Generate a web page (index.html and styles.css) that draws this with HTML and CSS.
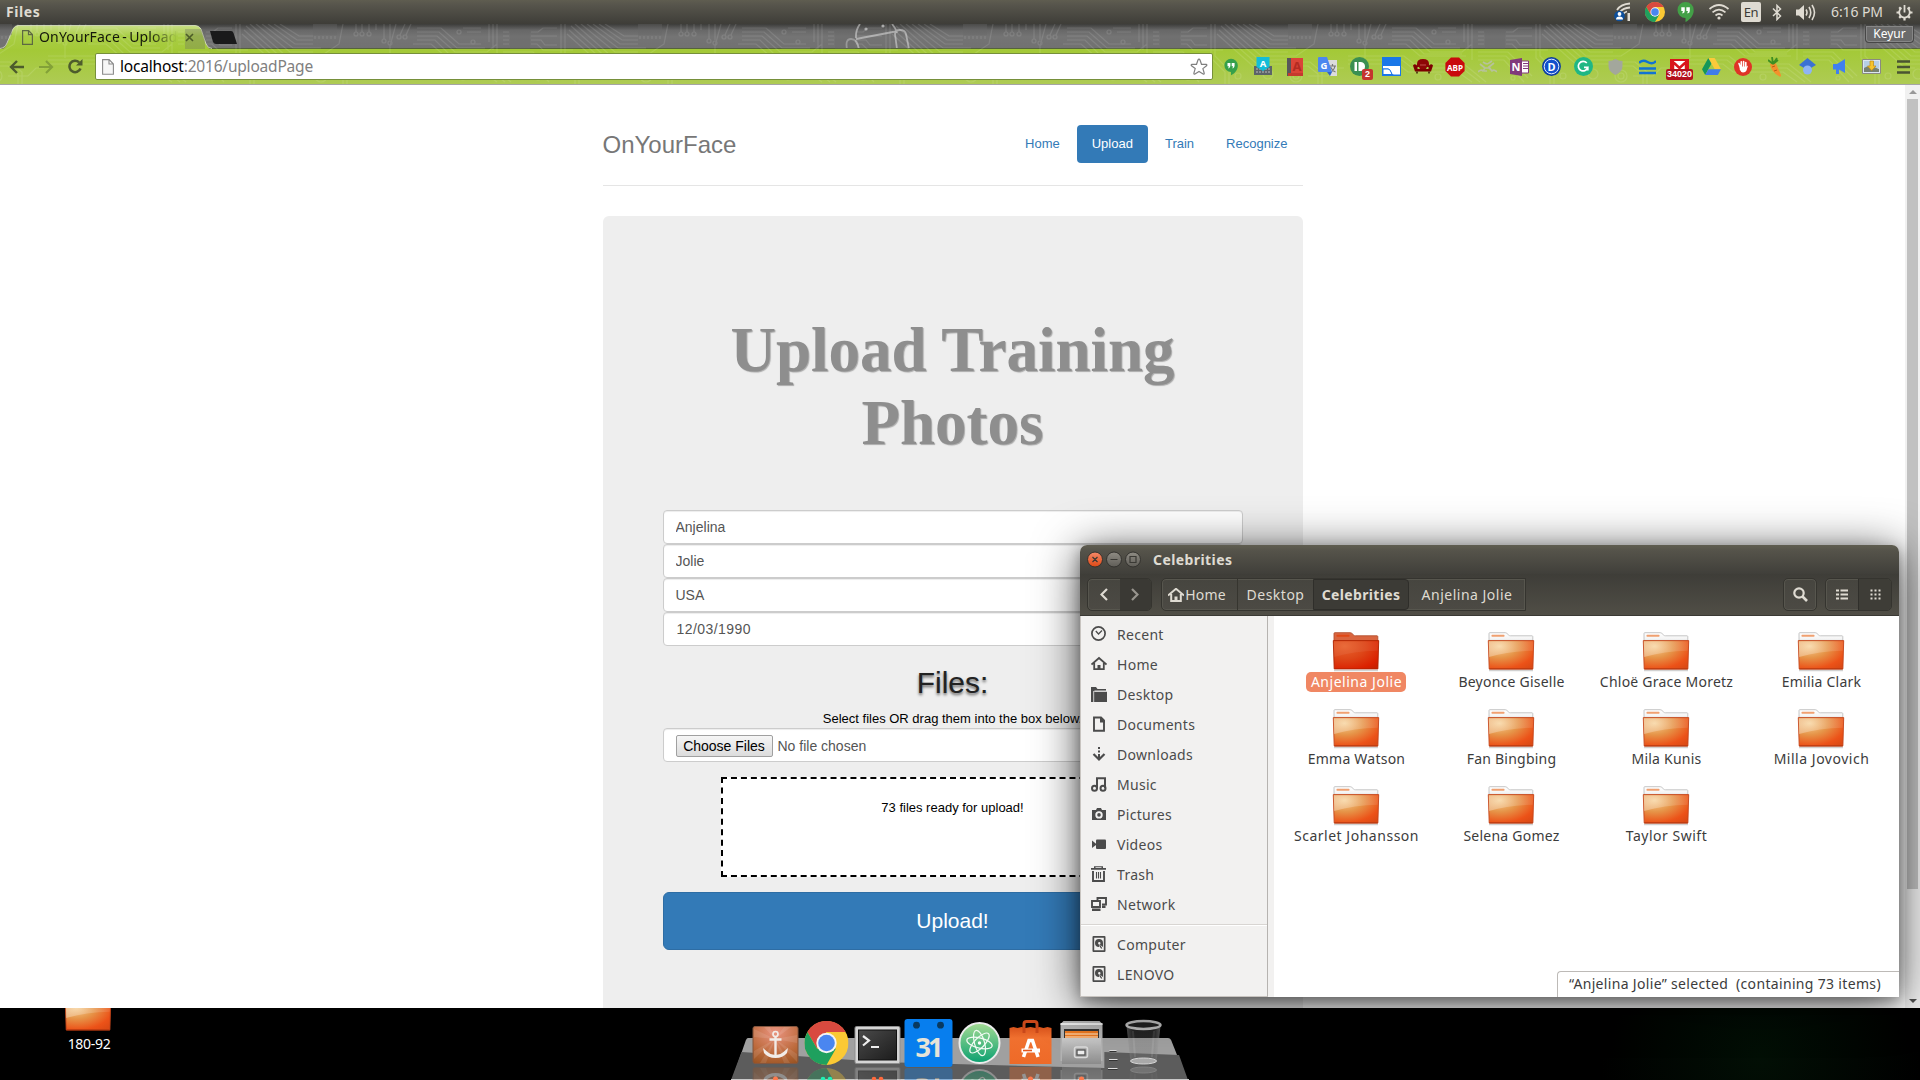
FILE: index.html
```html
<!DOCTYPE html>
<html lang="en">
<head>
<meta charset="utf-8">
<title>OnYourFace - Upload</title>
<link rel="stylesheet" href="styles.css">
</head>
<body>
<svg class="defs" width="0" height="0" aria-hidden="true">
  <defs>
    <linearGradient id="fBack" x1="0" y1="0" x2="0" y2="1"><stop offset="0" stop-color="#fff"/><stop offset=".6" stop-color="#f4f4f4"/><stop offset="1" stop-color="#ccc"/></linearGradient>
    <radialGradient id="fFront" cx=".25" cy=".2" r="1"><stop offset="0" stop-color="#f6cf94"/><stop offset=".4" stop-color="#e69549"/><stop offset=".8" stop-color="#ec5218"/><stop offset="1" stop-color="#dc4a14"/></radialGradient>
    <radialGradient id="fSel" cx=".25" cy=".2" r="1"><stop offset="0" stop-color="#e8622e"/><stop offset=".45" stop-color="#dd4618"/><stop offset=".85" stop-color="#db2100"/><stop offset="1" stop-color="#c92000"/></radialGradient>
    <linearGradient id="fShine" x1="0" y1="0" x2="1" y2="0"><stop offset="0" stop-color="#fff" stop-opacity=".32"/><stop offset="1" stop-color="#fff" stop-opacity=".08"/></linearGradient>
    <symbol id="folder" viewBox="0 0 48 40">
      <path d="M2 38.5h44" stroke="#000" stroke-opacity=".18" stroke-width="1.6"/>
      <path d="M2 11V1.5q0-.8.8-.8h15.4q1 0 1.800.8l1.800 1.700q.6.600 1.500.600h21.700q.8 0 .8.8V11z" fill="url(#fBack)" stroke="#bfbfbf" stroke-width=".9"/>
      <rect x="4.500" y="2.700" width="13" height="2" rx=".6" fill="#f0a070"/>
      <path d="M1.300 8.600h45.400l-.8 28.300H2.200z" fill="url(#fFront)" stroke="#c4441a" stroke-width=".9"/>
      <path d="M1.800 9.200h44.300l-.3 9.500Q22 19 2 25z" fill="url(#fShine)"/>
      <path d="M2.300 37h43.500" stroke="#b3350c" stroke-width="1"/>
    </symbol>
    <symbol id="folderSel" viewBox="0 0 48 40">
      <path d="M2 38.500h44" stroke="#000" stroke-opacity=".18" stroke-width="1.600"/>
      <path d="M2 11V1.500q0-.8.8-.8h15.400q1 0 1.800.8l1.800 1.700q.6.600 1.500.600h21.700q.8 0 .8.8V11z" fill="#d9653f" stroke="#b4502f" stroke-width=".9"/>
      <rect x="4.500" y="2.700" width="13" height="2" rx=".6" fill="#e04816"/>
      <path d="M1.300 8.600h45.400l-.8 28.300H2.200z" fill="url(#fSel)" stroke="#b02200" stroke-width=".9"/>
      <path d="M1.800 9.200h44.300l-.3 9.500Q22 19 2 25z" fill="#fff" fill-opacity=".06"/>
    </symbol>
    <symbol id="chrome" viewBox="0 0 44 44">
      <circle cx="22" cy="22" r="22" fill="#fbc934"/>
      <path d="M22 11h19.100A22 22 0 0 0 2.900 11L12.500 27.500z" fill="#d94a3f"/>
      <path d="M2.900 11A22 22 0 0 0 22 44L31.500 27.500 22 30 12.500 27.500z" fill="#1fa05e"/>
      <circle cx="22" cy="22" r="10.200" fill="#f4f4f4"/><circle cx="22" cy="22" r="8.300" fill="#4a86f0"/>
    </symbol>
    <symbol id="quote" viewBox="0 0 16 19">
      <path d="M8 0a7.600 7.600 0 0 0 0 15.200V19c4-2 7.800-6 7.800-11.200A7.700 7.700 0 0 0 8 0z" fill="currentColor"/>
      <path d="M4 5h3.300v3.200q0 1.800-1.600 2.600H4.600q.9-1 .9-2.200H4zm4.800 0h3.300v3.200q0 1.800-1.600 2.600H9.400q.9-1 .9-2.200H8.800z" fill="#fff"/>
    </symbol>
    <symbol id="disk" viewBox="0 0 16 16">
      <path fill-rule="evenodd" d="M2.500 0h11q1 0 1 1v14q0 1-1 1h-11q-1 0-1-1V1q0-1 1-1zM3.200 1.700v12.600h9.600V1.700z"/>
      <path fill-rule="evenodd" d="M8 3a4 4 0 0 1 4 4v4L8.500 8.500 8 11a4 4 0 0 1 0-8zm.3 3a1.200 1.200 0 1 0 0 2.400 1.200 1.200 0 0 0 0-2.400z"/><path d="M8.700 9.300l2 3.200" stroke="currentColor" stroke-width="1.300"/>
    </symbol>
    <pattern id="circuit" x="963" y="0" width="325" height="60" patternUnits="userSpaceOnUse">
      <g fill="none" stroke="#fff" stroke-width="1.200" opacity=".11">
        <path d="M2 12v3M6 12v3M10 12v3M14 12v3M18 12v3M22 12v3M30 0l-4 20-18 12H0M43 0v8M49 0v8M56 0v8M63 0v6M71 0v15M77 0v16M83 0l-6 22v12M92 0l-5 11M98 0l-5 11"/>
        <circle cx="43" cy="10" r="2"/><circle cx="49" cy="10" r="2"/><circle cx="56" cy="10" r="2"/><circle cx="71" cy="17" r="2"/><circle cx="77" cy="19" r="2"/><circle cx="86" cy="13" r="2"/><circle cx="92" cy="13" r="2"/>
        <path d="M104 4h24l18 16h22M104 8h22l18 16h28M104 12h20l18 16h32l10-8M104 16h18l14 14h38M100 20h18l14 12h46M60 32h56l10 8h50l22 18M60 36h54l10 8h50l18 14M60 40h50l10 8h50l14 10M176 0v18M180 0v26M184 0v36M168 4h-18M168 8h-14"/>
        <circle cx="146" cy="8" r="2"/><circle cx="160" cy="18" r="2"/>
        <path d="M190 8h6M190 12h6M190 16h6M190 20h6M218 8h7l5-4h14M218 12h26M218 16h10l4 5h12M218 20h6l6 6h30M190 28h30l24 24M190 32h28l22 22M190 36h26l20 22M248 0v34l14 14v12M252 0v32l14 14v14"/>
        <path d="M262 0l36 32h27M268 0l34 28h23M274 0l31 24h20M280 0l27 20h18M286 0l23 16h16M292 0l19 12h14M258 2l38 34h29M256 6l38 34h31M254 10l38 34h10"/>
        <path d="M0 38h22l12 10v12M0 42h20l10 8v10M0 24h8M20 52h20l8-8h8"/>
        <circle cx="305" cy="50" r="5"/><circle cx="275" cy="52" r="3"/><circle cx="8" cy="52" r="6"/><circle cx="8" cy="52" r="3"/><circle cx="150" cy="53" r="3"/><circle cx="225" cy="54" r="2"/>
      </g>
      <rect x="0" y="0" width="24" height="11" fill="#666" opacity=".35"/><rect x="197" y="5" width="20" height="20" fill="#666" opacity=".3"/>
    </pattern>
    <linearGradient id="strip" x1="0" y1="0" x2="0" y2="1"><stop offset="0" stop-color="#3c3c3a"/><stop offset=".25" stop-color="#686868"/><stop offset=".5" stop-color="#747474"/><stop offset="1" stop-color="#717171"/></linearGradient>
    <linearGradient id="tabFill" x1="0" y1="0" x2="0" y2="1"><stop offset="0" stop-color="#c8de86"/><stop offset=".45" stop-color="#a9ce44"/><stop offset="1" stop-color="#a4c938"/></linearGradient>
    <linearGradient id="bar" x1="0" y1="0" x2="0" y2="1"><stop offset="0" stop-color="#a3c936"/><stop offset="1" stop-color="#aecb54"/></linearGradient>
  </defs>
</svg>
<div class="screen">
  <header class="panel">
    <span class="panel-app">Files</span>
    <div class="indicators">
      <svg width="18" height="20" viewBox="0 0 18 20"><g fill="none" stroke="#dfdbd2" stroke-width="1.800"><path d="M3 8Q7 2 16 1.500M6 10q3-4 10-4.500M9 12q2-2 4-2.500"/></g><path d="M13.500 11h2.500v8h-2.500z" fill="#dfdbd2"/><circle cx="5.500" cy="14" r="5.300" fill="#0c4f9c"/><circle cx="5.500" cy="12" r="1.900" fill="#fff"/><path d="M2 17.500q0-3 3.500-3t3.500 3z" fill="#fff"/></svg>
      <svg width="20" height="20"><use href="#chrome"/></svg>
      <svg class="hang" width="17" height="20"><use href="#quote"/></svg>
      <svg width="22" height="16" viewBox="0 0 22 16"><g fill="none" stroke="#dfdbd2" stroke-width="1.700"><path d="M1.500 5Q11-3 20.500 5M4.500 8.300q6.500-5.500 13 0M7.500 11.500q3.500-3 7 0"/></g><circle cx="11" cy="14" r="1.600" fill="#dfdbd2"/></svg>
      <span class="lang">En</span>
      <svg width="10" height="17" viewBox="0 0 10 17"><path d="M1 4.500l7.500 7.500L5 15.500v-14L8.500 5 1 12" fill="none" stroke="#dfdbd2" stroke-width="1.500"/></svg>
      <svg width="21" height="17" viewBox="0 0 21 17"><path d="M1 5.500h3L9 1v15l-5-4.500H1z" fill="#dfdbd2"/><g fill="none" stroke="#dfdbd2" stroke-width="1.600"><path d="M11 5.500q2 3 0 6M14 3q3.500 5.500 0 11M17 1q5 7.500 0 15"/></g></svg>
      <span class="clock">6:16 PM</span>
      <svg width="17" height="17" viewBox="0 0 17 17"><g fill="none" stroke="#dfdbd2" stroke-width="1.800"><path d="M5.500 4a5.300 5.300 0 1 0 6 0M8.500 1v7.500"/><path d="M3.200 3.200 4.600 4.600M12.400 12.400l1.500 1.500M3.200 13.900l1.500-1.500M13.800 3.200l-1.400 1.400M.5 8.500h2.700M13.800 8.500h2.700M8.500 13.800v2.700" stroke-width="2.200"/></g></svg>
    </div>
  </header>

  <div class="browser-top">
    <svg class="chrome-art" width="1920" height="61" viewBox="0 0 1920 61">
      <rect width="1920" height="25" fill="url(#strip)"/>
      <g fill="none" stroke="#fff" stroke-opacity=".42" stroke-width="1.800"><path d="M856 14a21 21 0 0 1 4-14M892 0a22 22 0 0 1 5 9M856 15l42-8M859 25q-2-10-8-10t-4 10M897 25l-2-15q0-4 5-4t6 4l3 15"/></g>
      <circle cx="866" cy="5" r="1.600" fill="#aaa"/><circle cx="883" cy="2" r="1.600" fill="#aaa"/>
      <rect y="25" width="1920" height="35" fill="url(#bar)"/>
      <path d="M0 24.500h1920" stroke="#55633a"/>
      <path d="M0 25.500Q5 25 7 20L13 5Q15 1.500 18 1.500H195Q199 1.500 201 5L206 20Q208 25 212 25.500z" fill="url(#tabFill)"/>
      <path d="M0 24.500Q5 24 7 19L13 5Q15 1.500 18 1.500H195Q199 1.500 201 5L206 20Q208 24.500 212 24.500" fill="none" stroke="#d8dfc0" stroke-opacity=".85"/>
      <rect width="1920" height="60" fill="url(#circuit)"/>
      <path d="M210 7H231q2 0 2.500 2L237 20H216q-2 0-3-2z" fill="#1a1a1b"/>
      <rect y="60" width="1920" height="1" fill="#a5a5a5"/>
    </svg>
    <div class="tabstrip">
      <div class="tab">
        <svg width="11" height="15" viewBox="0 0 11 15"><path d="M.6.600h6L10.400 4.600v9.700H.6zM6.500.6v4h4" fill="none" stroke="#5d6942" stroke-width="1.200"/></svg>
        <span class="tab-title">OnYourFace - Upload</span>
        <svg width="9" height="9" viewBox="0 0 9 9"><path d="M1 1l7 7M8 1 1 8" stroke="#4c5c28" stroke-width="1.600"/></svg>
      </div>
      <span class="profile">Keyur</span>
    </div>
    <div class="toolbar">
      <div class="nav-buttons">
        <svg width="16" height="14" viewBox="0 0 16 14"><path d="M8 1 2 7l6 6M2 7h13" fill="none" stroke="#4d5c2c" stroke-width="2.400"/></svg>
        <svg width="16" height="14" viewBox="0 0 16 14"><path d="M8 1l6 6-6 6M14 7H1" fill="none" stroke="#83a138" stroke-width="2.200"/></svg>
        <svg width="16" height="15" viewBox="0 0 16 15"><path d="M13.500 9.500a5.700 5.700 0 1 1-1.400-6.200" fill="none" stroke="#4d5c2c" stroke-width="2.500"/><path d="M15.500 0v6.500H9z" fill="#4d5c2c"/></svg>
      </div>
      <div class="omnibox">
        <svg width="12" height="16" viewBox="0 0 12 16"><path d="M.6.600h6.600L11.400 5v10.300H.6zM7 .6V5h4.400" fill="#f7f7f7" stroke="#8a8a8a" stroke-width="1.100"/></svg>
        <span class="url"><b>localhost</b>:2016/uploadPage</span>
        <svg class="star" width="18" height="18" viewBox="0 0 18 18"><path d="M9 1.200q.7 0 1 .8l1.500 4.300 4.600.1q1.300.3.400 1.400l-3.600 2.800 1.300 4.500q.2 1.400-1.100.9L9 13.500l-4 2.500q-1.300.5-1.100-.9l1.300-4.500L1.500 7.800Q.6 6.700 2 6.400l4.500-.1L8 2q.3-.8 1-.8z" fill="#fff" stroke="#808080" stroke-width="1.200"/></svg>
      </div>
      <div class="extensions">
        <span class="ext hang2"><svg width="14" height="18"><use href="#quote"/></svg></span>
        <span class="ext"><svg width="18" height="19" viewBox="0 0 18 19"><path d="M0 9h18v9H0z" fill="#5c6468"/><path d="M2 12h14M2 15h14" stroke="#bbb" stroke-dasharray="2 1"/><path d="M2.500 0h13v10L9 14l-6.500-4z" fill="#13bdd8"/><text x="9" y="10" class="t10">A</text></svg></span>
        <span class="ext"><svg width="16" height="18" viewBox="0 0 16 18"><path d="M0 0h16v18H0z" fill="#da4437"/><path d="M0 0h4v18H0z" fill="#57575a"/><path d="M1 15h15v3H1z" fill="#c5392e"/><text x="10" y="13" class="t13" fill="#b32b22">A</text></svg></span>
        <span class="ext"><svg width="19" height="19" viewBox="0 0 19 19"><path d="M8 3h11v16h-7z" fill="#dcdcdc"/><path d="M11 9h7M14.500 7v2M17 9q-1 5-5 6M12.500 10q2 4 5 5" fill="none" stroke="#777" stroke-width="1.200"/><path d="M0 1q0-1 1-1h8l5 15H1q-1 0-1-1z" fill="#4b87ef"/><path d="M9 15h5l-2 4z" fill="#2f63c6"/><text x="6" y="11.500" class="t10">G</text></svg></span>
        <span class="ext"><svg width="19" height="19" viewBox="0 0 19 19"><circle cx="9.500" cy="9.500" r="9.500" fill="#3a8f52"/><path d="M4.500 5h2.500v9H4.500zM8.500 5H11q4 .5 4 4.500T11 14H8.500z" fill="#fff"/></svg><b class="badge">2</b></span>
        <span class="ext"><svg width="19" height="19" viewBox="0 0 19 19"><path d="M0 0h19v19H0z" fill="#1977e8"/><path d="M1 9h17v8.500h-6q-2 0-3-3t-3-3H1z" fill="#fff"/><path d="M1 12h5q2 0 3 3l1 2.500H1z" fill="#fff" stroke="#1977e8"/></svg></span>
        <span class="ext"><svg width="20" height="15" viewBox="0 0 20 15"><path d="M4 5q0-5 6-5t6 5v3h-2l-1 2H7L6 8H4z" fill="#8d0606"/><path d="M0 6.500Q2 4 4.500 7v3h11V7Q18 4 20 6.500l-2 6H2z" fill="#7d0000"/><path d="M4 12.500v2M16 12.500v2" stroke="#42230b" stroke-width="1.600"/><path d="M7 6h6" stroke="#c0504a"/></svg></span>
        <span class="ext"><svg width="20" height="20" viewBox="0 0 20 20"><path d="M6 .4h8L19.600 6v8L14 19.600H6L.4 14V6z" fill="#c90a0d"/><text x="10" y="13.500" class="t9" textLength="16" lengthAdjust="spacingAndGlyphs">ABP</text></svg></span>
        <span class="ext"><svg width="19" height="14" viewBox="0 0 19 14"><path d="M0 12q3-3 5-1l2-3-5-4M19 12q-3-3-5-1l-3-4 5-4M5 2q4 3 6 1l3-2M7 8h4l2 2M6 11h3" fill="none" stroke="#b7c29a" stroke-width="1.700"/></svg></span>
        <span class="ext"><svg width="19" height="18" viewBox="0 0 19 18"><path d="M11 3h7.500v12H11z" fill="#fff" stroke="#80397b"/><path d="M13 5.500h5M13 8h5M13 10.500h5" stroke="#80397b"/><path d="M0 2l12-2v18L0 16z" fill="#80397b"/><text x="6" y="13" class="t11">N</text></svg></span>
        <span class="ext"><svg width="19" height="19" viewBox="0 0 19 19"><circle cx="9.500" cy="9.500" r="8.800" fill="#1250cc" stroke="#0d3c9a" stroke-width="1.200"/><circle cx="9.500" cy="9.500" r="7.300" fill="none" stroke="#dfe8fa"/><text x="9.500" y="13.500" class="t11">D</text></svg></span>
        <span class="ext"><svg width="19" height="19" viewBox="0 0 19 19"><circle cx="9.500" cy="9.500" r="9.500" fill="#1fb784"/><path d="M12.800 6a4.800 4.800 0 1 0 1 4.300H10M13.800 10v3.500" fill="none" stroke="#fff" stroke-width="1.700"/></svg></span>
        <span class="ext"><svg width="15" height="16" viewBox="0 0 15 16"><path d="M7.500 0q3 2 7 2v5q0 6-7 9-7-3-7-9V2q4 0 7-2z" fill="#a3a79c"/></svg></span>
        <span class="ext"><svg width="17" height="16" viewBox="0 0 17 16"><path d="M0 4q3.500-4 8.500-1T17 2M0 9.500h17M0 14h17" fill="none" stroke="#1173d2" stroke-width="2.300"/></svg></span>
        <span class="ext"><svg width="19" height="15" viewBox="0 0 19 15"><path d="M0 0h19v15H0z" fill="#d9141b"/><path d="M3 2h13v12H3z" fill="#fff"/><path d="M3 2v12M16 2v12M3 3l6.500 6L16 3" fill="none" stroke="#d9141b" stroke-width="2.500"/></svg><b class="badge wide">34020</b></span>
        <span class="ext"><svg width="19" height="17" viewBox="0 0 19 17"><path d="M6.300 0h6.400L6.400 11 3.200 17 0 11.300z" fill="#12975a"/><path d="M6.300 0h6.400L19 11.300h-6.300z" fill="#fcca3b"/><path d="M6.400 11.300H19L15.800 17H3.200z" fill="#3f7de8"/></svg></span>
        <span class="ext"><svg width="18" height="18" viewBox="0 0 18 18"><circle cx="9" cy="9" r="9" fill="#df3327"/><path d="M5 5.500l1.500 4M7.300 3.800v5M9.600 3.500v5M11.800 4.500v6" stroke="#fff" stroke-width="1.600" stroke-linecap="round"/><path d="M5.700 8.500h7l1.300-1-1.500 5q-1 2-3.500 2-2 0-3.300-3z" fill="#fff"/></svg></span>
        <span class="ext"><svg width="14" height="20" viewBox="0 0 14 20"><path d="M2 7q3-2 6-.5L13 18q.2 2-1.500 1.500Q3 15 2 7z" fill="#f3912c"/><path d="M4 10l3-1M6 14l3-1" stroke="#b95f12"/><path d="M5 7 0 3M5 7 4 0M5 7l4-6M5 7l5-4" stroke="#3d8f22" stroke-width="1.800"/></svg></span>
        <span class="ext"><svg width="17" height="17" viewBox="0 0 17 17"><path d="M8.500 0 17 7l-8.500 5L0 7z" fill="#3b71d3"/><circle cx="8.500" cy="12" r="4.500" fill="#8fb4f4"/></svg></span>
        <span class="ext"><svg width="14" height="16" viewBox="0 0 14 16"><path d="M1 5h4l8-5v14l-6-3.500V15H4v-4.500H1z" fill="#3f7ff0"/></svg></span>
        <span class="ext"><svg width="19" height="15" viewBox="0 0 19 15"><path d="M.5.500h18v14H.5z" fill="#dbe6f0" stroke="#8a8a80"/><path d="M2 2h15v7H2z" fill="#b6cfe6"/><path d="M2 9q5-4 15 1v3H2z" fill="#77816f"/><path d="M8 2h3.500v5H14l-4.300 4.500L5.500 7H8z" fill="#f6c42c" stroke="#c08a10" stroke-width=".7"/></svg></span>
        <span class="ext"><svg width="13" height="14" viewBox="0 0 13 14"><path d="M0 1.500h13M0 7h13M0 12.500h13" stroke="#4a5432" stroke-width="2.600"/></svg></span>
      </div>
    </div>
  </div>

  <div class="viewport">
    <main class="container">
      <div class="site-header">
        <h3>OnYourFace</h3>
        <nav><a>Home</a><a class="active">Upload</a><a>Train</a><a>Recognize</a></nav>
      </div>
      <section class="jumbotron">
        <h1>Upload Training Photos</h1>
        <input class="field" value="Anjelina">
        <input class="field" value="Jolie">
        <input class="field" value="USA">
        <input class="field date" value="12/03/1990">
        <h2>Files:</h2>
        <p>Select files OR drag them into the box below.</p>
        <div class="field file"><button>Choose Files</button><span>No file chosen</span></div>
        <div class="drop">73 files ready for upload!</div>
        <button class="submit">Upload!</button>
      </section>
    </main>
    <div class="scrollbar"><i class="up"></i><i class="thumb"></i><i class="down"></i></div>
  </div>

  <footer class="desktop">
    <div class="desk-folder"><div class="clip"><svg width="48" height="40"><use href="#folder"/></svg></div><span>180-92</span></div>
    <div class="dock">
      <svg class="shelf" width="458" height="42" viewBox="0 0 460 42" preserveAspectRatio="none">
        <path d="M17 0h422q2 0 3 2l16 40H1L15 2q1-2 2-2z" fill="#a0a0a0"/>
        <path d="M10.500 14 150 24l225 6V14l75 3 9 25H0z" fill="#5c5c5c"/>
        <path d="M0 41.500h460" stroke="#c9c9c9"/>
      </svg>
      <svg class="app" viewBox="0 0 51 61">
        <defs><radialGradient id="anc" cx=".5" cy=".15" r="1"><stop offset="0" stop-color="#ea9480"/><stop offset=".6" stop-color="#bc6a3c"/><stop offset="1" stop-color="#94501f"/></radialGradient></defs>
        <g id="i1"><rect x="3" y="7.500" width="45" height="37" rx="2" fill="url(#anc)" stroke="#84563f"/><path d="M25 20 4 10v8zM25 20 14 8h6zM25 20 34 8h7zM25 20l22-4v8zM25 20 4 32v8zM25 20l22 15v8zM25 20l-9 24h-6zM25 20l9 24h6z" fill="#fff" opacity=".1"/><circle cx="25.500" cy="15" r="2.500" fill="none" stroke="#f2ece8" stroke-width="1.700"/><path d="M25.500 17.500V37M19.500 20.500h12" stroke="#f2ece8" stroke-width="2.400"/><path d="M13 29l1 5q4 5 11.500 5t11.500-5l1-5-4 3.500q-3 3-8.500 3.500-5.500-.5-8.500-3.500z" fill="#f2ece8"/></g>
        <use href="#i1" transform="matrix(1 0 0 -1 0 93)" opacity=".35"/><circle cx="25.500" cy="60" r="2.500" fill="#ff7a4d"/>
      </svg>
      <svg class="app" viewBox="0 0 51 61">
        <g id="i2"><svg x="3.500" y="2" width="44" height="44"><use href="#chrome"/></svg></g>
        <use href="#i2" transform="matrix(1 0 0 -1 0 95)" opacity=".35"/><circle cx="22" cy="60" r="2.300" fill="#22f0b4"/><circle cx="29" cy="60" r="2.300" fill="#22f0b4"/>
      </svg>
      <svg class="app" viewBox="0 0 51 61">
        <defs><linearGradient id="tm" x1="0" y1="0" x2="1" y2="1"><stop offset="0" stop-color="#4a4a4a"/><stop offset="1" stop-color="#1c1c1c"/></linearGradient></defs>
        <g id="i3"><rect x="3" y="7.500" width="45" height="37" rx="1.500" fill="#d5d5d5" stroke="#8f8f8f"/><rect x="6.500" y="11" width="38" height="30" fill="url(#tm)" stroke="#111"/><path d="M11 17l6 4.500-6 5M19 28h8" fill="none" stroke="#eee" stroke-width="2.200"/></g>
        <use href="#i3" transform="matrix(1 0 0 -1 0 93)" opacity=".3"/><circle cx="22" cy="60" r="2.300" fill="#ff6a3d"/><circle cx="29" cy="60" r="2.300" fill="#ff6a3d"/>
      </svg>
      <svg class="app" viewBox="0 0 51 61">
        <g id="i4"><rect x="1.500" y="0" width="48" height="48" rx="3" fill="#077eee"/><circle cx="13.500" cy="6.200" r="3.400" fill="#09395f"/><circle cx="37.500" cy="6.200" r="3.400" fill="#09395f"/><text x="26.500" y="38" class="cal" textLength="28">31</text></g>
        <use href="#i4" transform="matrix(1 0 0 -1 0 97)" opacity=".35"/>
      </svg>
      <svg class="app" viewBox="0 0 51 61">
        <defs><linearGradient id="at" x1="0" y1="0" x2="0" y2="1"><stop offset="0" stop-color="#a5dc94"/><stop offset="1" stop-color="#0aa070"/></linearGradient></defs>
        <g id="i5"><circle cx="25.500" cy="24" r="20" fill="url(#at)" stroke="#ececec" stroke-width="2"/><g fill="none" stroke="#f2fbf4" stroke-width="1.200"><ellipse cx="25.500" cy="24" rx="13" ry="5" transform="rotate(14 25.500 24)"/><ellipse cx="25.500" cy="24" rx="13" ry="5" transform="rotate(74 25.500 24)"/><ellipse cx="25.500" cy="24" rx="13" ry="5" transform="rotate(-46 25.500 24)"/></g><circle cx="25.500" cy="24" r="1.700" fill="#fff"/></g>
        <use href="#i5" transform="matrix(1 0 0 -1 0 95)" opacity=".35"/>
      </svg>
      <svg class="app" viewBox="0 0 51 61">
        <defs><linearGradient id="sw" x1="0" y1="0" x2="0" y2="1"><stop offset="0" stop-color="#d9541c"/><stop offset=".3" stop-color="#f0702f"/><stop offset="1" stop-color="#ee6a28"/></linearGradient></defs>
        <g id="i6"><path d="M4.500 9l4-1 4 1 4-1 4 1 5-1 5 1 4-1 4 1 4-1 4 1v36h-42z" fill="url(#sw)"/><path d="M19 14V5q0-2.500 2.500-2.500h8Q32 2.500 32 5v9" fill="none" stroke="#c9481a" stroke-width="3"/><path d="M18.500 38l5.500-16.500h3.500l5.500 16.500" fill="none" stroke="#fff" stroke-width="3.500"/><path d="M16.500 29.500h18.500v4H16.500z" fill="#fff"/><path d="M18 31.500h9" stroke="#e4571c" stroke-width="1.600"/></g>
        <use href="#i6" transform="matrix(1 0 0 -1 0 93)" opacity=".35"/><circle cx="25.500" cy="60" r="2.500" fill="#ff7a4d"/>
      </svg>
      <svg class="app" viewBox="0 0 51 61">
        <defs><linearGradient id="cb" x1="0" y1="0" x2="0" y2="1"><stop offset="0" stop-color="#c9c9c9"/><stop offset="1" stop-color="#8b8b8b"/></linearGradient></defs>
        <g id="i7"><path d="M4.500 5l3-3h36l3 3v37h-42z" fill="#b2b2b2"/><path d="M4.500 5h42" stroke="#e8e8e8" stroke-width="2"/><path d="M8 10h35v10H8z" fill="#333"/><path d="M9 12h33v7H9z" fill="#e97720"/><path d="M9 15h33M9 18h33" stroke="#fbe5c8" stroke-width="1.200"/><path d="M6 19h39v26H6z" fill="url(#cb)"/><rect x="18.500" y="28" width="13" height="10.500" rx="2" fill="none" stroke="#dadada" stroke-width="1.500"/><rect x="21" y="31" width="8" height="5" fill="#eee" stroke="#555" stroke-width="1.300"/></g>
        <use href="#i7" transform="matrix(1 0 0 -1 0 93)" opacity=".35"/><circle cx="25.500" cy="60" r="2.500" fill="#ff7a4d"/>
      </svg>
      <svg class="sep" viewBox="0 0 11 61"><path d="M2.500 31.500h7M2 40.500h8.500M1 49.500h9.500" stroke="#ddd" stroke-width="1"/><path d="M2.500 32.500h7M2 41.500h8.500M1 50.500h9.500" stroke="#333" stroke-width="1"/></svg>
      <svg class="app" viewBox="0 0 51 61">
        <defs><linearGradient id="tr" x1="0" y1="0" x2="1" y2="0"><stop offset="0" stop-color="#999" stop-opacity=".5"/><stop offset=".2" stop-color="#777" stop-opacity=".3"/><stop offset=".8" stop-color="#777" stop-opacity=".3"/><stop offset="1" stop-color="#aaa" stop-opacity=".5"/></linearGradient></defs>
        <g id="i8"><path d="M8.500 7h34l-4 36q-13 4-26 0z" fill="url(#tr)"/><path d="M15 12l2 26M36 12l-2 26" stroke="#fff" stroke-opacity=".1" stroke-width="2"/><ellipse cx="25.500" cy="6" rx="17" ry="4" fill="#222" stroke="#bdbdbd" stroke-width="2.500"/><ellipse cx="25.500" cy="42" rx="13" ry="3" fill="#a9a9a9" stroke="#d5d5d5"/></g>
        <use href="#i8" transform="matrix(1 0 0 -1 0 93)" opacity=".3"/>
      </svg>
    </div>
  </footer>

  <div class="window">
    <div class="titlebar">
      <svg width="54" height="17" viewBox="0 0 54 17"><defs><linearGradient id="wc" x1="0" y1="0" x2="0" y2="1"><stop offset="0" stop-color="#f58a6a"/><stop offset="1" stop-color="#dd4814"/></linearGradient><linearGradient id="wg" x1="0" y1="0" x2="0" y2="1"><stop offset="0" stop-color="#8f8c84"/><stop offset="1" stop-color="#5f5d57"/></linearGradient></defs>
        <circle cx="8" cy="8.500" r="7.500" fill="url(#wc)" stroke="#33322e"/><circle cx="27" cy="8.500" r="7.500" fill="url(#wg)" stroke="#33322e"/><circle cx="46" cy="8.500" r="7.500" fill="url(#wg)" stroke="#33322e"/>
        <path d="M5.500 6l5 5M10.500 6l-5 5M23.500 8.500h7M43 5.500h6v6h-6z" fill="none" stroke="#3a3934" stroke-width="1.200"/></svg>
      <span>Celebrities</span>
    </div>
    <div class="wbar">
      <div class="grp hist"><span><svg width="8" height="13" viewBox="0 0 8 13"><path d="M7 1 1.500 6.500 7 12" fill="none" stroke="#dfdbd2" stroke-width="2.200"/></svg></span><span class="dark"><svg width="8" height="13" viewBox="0 0 8 13"><path d="M1 1l5.500 5.500L1 12" fill="none" stroke="#98958e" stroke-width="2.200"/></svg></span></div>
      <div class="grp path">
        <span class="p1"><svg width="16" height="14" viewBox="0 0 16 14"><path d="M0 7.500 8 .8l8 6.700M3.200 6v7h9.600V6" fill="none" stroke="#dfdbd2" stroke-width="2"/><path d="M6.500 8.500h3V13h-3z" fill="#dfdbd2"/></svg>Home</span>
        <span class="p2">Desktop</span><span class="p3">Celebrities</span><span class="p4">Anjelina Jolie</span>
      </div>
      <div class="grp search"><span><svg width="15" height="15" viewBox="0 0 15 15"><circle cx="6" cy="6" r="4.700" fill="none" stroke="#dfdbd2" stroke-width="2.200"/><path d="M9.500 9.500 14 14" stroke="#dfdbd2" stroke-width="2.600"/></svg></span></div>
      <div class="grp views"><span><svg width="12" height="11" viewBox="0 0 12 11"><path d="M0 1.500h3m1.500 0H12M0 5.500h3m1.500 0H12M0 9.500h3m1.500 0H12" stroke="#dfdbd2" stroke-width="2"/></svg></span><span class="dark2"><svg width="11" height="11" viewBox="0 0 11 11"><path d="M.500 1.500h10M.500 5.500h10M.500 9.500h10" stroke="#dfdbd2" stroke-width="2" stroke-dasharray="2 2"/></svg></span></div>
    </div>
    <div class="wbody">
      <ul class="places">
        <li><svg viewBox="0 0 16 16"><circle cx="7.500" cy="7.500" r="6.600" fill="none" stroke="currentColor" stroke-width="1.700"/><path d="M4.800 5l2.700 3L11 4.500" fill="none" stroke="currentColor" stroke-width="1.300"/></svg>Recent</li>
        <li><svg viewBox="0 0 16 16"><path d="M.5 8.500 8 2l7.500 6.500M3.200 7v6.200h9.600V7" fill="none" stroke="currentColor" stroke-width="1.800"/><path d="M6.500 9h3v4h-3z"/></svg>Home</li>
        <li><svg viewBox="0 0 16 16"><path d="M0 1h5l1.500 2H15v1.700H4V16H0z"/><path d="M3 5.500h13V16H3z"/><path d="M3 5.200h13" stroke="#f2f1f0" stroke-width=".9"/><path d="M2.700 5v11" stroke="#f2f1f0" stroke-width=".8"/></svg>Desktop</li>
        <li><svg viewBox="0 0 16 16"><path d="M3 1.500h7l3 3v10.200H3z" fill="none" stroke="currentColor" stroke-width="1.900"/><path d="M9 1h1l4 4v1.500H9z"/></svg>Documents</li>
        <li><svg viewBox="0 0 16 16"><path d="M7 1h2v2H7zM7 4.500h2v2H7zM7 8h2v5H7z"/><path d="M2.500 8 8 13.500 13.500 8" fill="none" stroke="currentColor" stroke-width="2.200"/></svg>Downloads</li>
        <li><svg viewBox="0 0 16 16"><path d="M6 12.500V2.200h8v10" fill="none" stroke="currentColor" stroke-width="2"/><circle cx="3.500" cy="12.200" r="2.500" fill="none" stroke="currentColor" stroke-width="2"/><circle cx="12" cy="12.200" r="2.500" fill="none" stroke="currentColor" stroke-width="2"/></svg>Music</li>
        <li><svg viewBox="0 0 16 16"><path fill-rule="evenodd" d="M1 4h4l1-2h4l1 2h4v10H1zM8 5.200a3.700 3.700 0 1 0 0 7.400 3.700 3.700 0 0 0 0-7.400z"/><circle cx="8" cy="8.900" r="1.800"/></svg>Pictures</li>
        <li><svg viewBox="0 0 16 16"><rect x="5" y="3.500" width="10" height="9.500" rx="1"/><path d="M1 4.500l4 3.200v1.200l-4 3.200z"/></svg>Videos</li>
        <li><svg viewBox="0 0 16 16"><path d="M0 2h3V.3h9V2h3v1.800H0zM4.500 1.300V2h6v-.7z" fill-rule="evenodd"/><path d="M2 5v10h11V5" fill="none" stroke="currentColor" stroke-width="1.900"/><path d="M5.500 6v6.500M7.500 6v6.500M9.500 6v6.500" stroke="currentColor" stroke-width="1.100"/></svg>Trash</li>
        <li><svg viewBox="0 0 16 16"><path d="M1 5h8v6H1zM6.500 4V2H15v6.500h-4" fill="none" stroke="currentColor" stroke-width="1.900"/><path d="M1 12.500h8.500V15H1zM11 9.500h3.500V12H11z"/></svg>Network</li>
        <li class="rule"></li>
        <li><svg><use href="#disk"/></svg>Computer</li>
        <li><svg><use href="#disk"/></svg>LENOVO</li>
      </ul>
      <div class="files">
        <div class="grid">
          <div class="item sel loose"><svg><use href="#folderSel"/></svg><span>Anjelina Jolie</span></div>
          <div class="item"><svg><use href="#folder"/></svg><span>Beyonce Giselle</span></div>
          <div class="item"><svg><use href="#folder"/></svg><span>Chloë Grace Moretz</span></div>
          <div class="item"><svg><use href="#folder"/></svg><span>Emilia Clark</span></div>
          <div class="item"><svg><use href="#folder"/></svg><span>Emma Watson</span></div>
          <div class="item"><svg><use href="#folder"/></svg><span>Fan Bingbing</span></div>
          <div class="item"><svg><use href="#folder"/></svg><span>Mila Kunis</span></div>
          <div class="item loose"><svg><use href="#folder"/></svg><span>Milla Jovovich</span></div>
          <div class="item loose"><svg><use href="#folder"/></svg><span>Scarlet Johansson</span></div>
          <div class="item"><svg><use href="#folder"/></svg><span>Selena Gomez</span></div>
          <div class="item loose"><svg><use href="#folder"/></svg><span>Taylor Swift</span></div>
        </div>
        <div class="status">“Anjelina Jolie” selected&nbsp; (containing 73 items)</div>
      </div>
    </div>
  </div>
</div>
</body>
</html>
```
FILE: styles.css
```css
* { box-sizing: border-box; }
html, body { margin: 0; background: #000; overflow: hidden; }
body { font-family: "Noto Sans", sans-serif; font-size: 14px; color: #3c3c3c; }
svg { display: block; flex: none; }
.defs { position: absolute; }
.screen { position: relative; width: 1920px; height: 1080px; overflow: hidden; display: flex; flex-direction: column; background: #000; }

/* top panel */
.panel { height: 24px; flex: none; display: flex; justify-content: space-between; align-items: center; padding: 0 7px 0 6px; background: linear-gradient(#5f5d50, #57554c 20%, #3e3d38); color: #dfdbd2; }
.panel-app { font-weight: 700; font-size: 14px; line-height: 24px; letter-spacing: .6px; }
.indicators { display: flex; align-items: center; }
.indicators > * { margin-left: 13px; }
.indicators .hang { color: #43a047; margin-left: 12px; }
.indicators svg:nth-child(4) { margin-left: 14px; }
.indicators .lang { width: 20px; height: 20px; margin-left: 11px; border-radius: 2px; background: #dfdbd2; color: #3c3b37; font-size: 13px; line-height: 20px; text-align: center; letter-spacing: -.5px; }
.indicators svg:nth-child(6) { margin-left: 11px; }
.indicators .clock { width: 53px; margin-left: 15px; font-size: 14px; line-height: 24px; letter-spacing: -.1px; white-space: nowrap; }
.indicators svg:last-child { margin-left: 12px; }

/* browser frame */
.browser-top { position: relative; height: 61px; flex: none; }
.chrome-art { position: absolute; left: 0; top: 0; }
.tabstrip { position: relative; height: 25px; display: flex; justify-content: space-between; }
.tab { width: 212px; padding: 1px 0 0 22px; display: flex; align-items: center; color: #15180c; }
.tab-title { width: 138px; margin: 0 8px 0 6px; overflow: hidden; white-space: nowrap; font-size: 14px; line-height: 22px; letter-spacing: .15px; word-spacing: -1.500px; -webkit-mask-image: linear-gradient(90deg, #000 80%, transparent); mask-image: linear-gradient(90deg, #000 80%, transparent); }
.profile { width: 49px; height: 17px; margin: 2px 6px 0 0; border: 1px solid #474747; border-top: 0; border-radius: 0 0 4px 4px; background: #6b6b6b; color: #fff; font-size: 12px; line-height: 16px; text-align: center; box-shadow: inset 0 0 0 1px #868686; }
.toolbar { position: relative; height: 35px; display: flex; align-items: center; }
.nav-buttons { width: 95px; padding-left: 9px; display: flex; gap: 13px; align-items: center; }
.omnibox { width: 1118px; height: 27px; margin-right: 2px; padding: 0 4px 0 6px; display: flex; align-items: center; border: 1px solid #76903a; border-radius: 2px; background: #fff; }
.url { flex: 1; margin-left: 6px; font-size: 15.500px; line-height: 25px; letter-spacing: -.2px; color: #808080; }
.url b { font-weight: 400; color: #000; }
.extensions { display: flex; }
.ext { position: relative; width: 32px; height: 35px; display: flex; align-items: center; justify-content: center; }
.hang2 { color: #35a04a; }
.badge { position: absolute; right: 2px; bottom: 4px; width: 11px; height: 11px; border-radius: 2px; background: #c4352e; color: #fff; font: 700 9px/11px "Liberation Sans", sans-serif; text-align: center; }
.badge.wide { width: 27px; background: #b3121d; font-size: 9px; }
.ext text, .cal { font-family: "Noto Sans", sans-serif; font-weight: 700; text-anchor: middle; }
.t9 { font-size: 9px; fill: #fff; }
.t10 { font-size: 9.500px; fill: #fff; }
.t11 { font-size: 11px; fill: #fff; }
.t13 { font-size: 13px; }

/* web page */
.viewport { height: 923px; flex: none; display: flex; background: #fff; overflow: hidden; font-family: "Liberation Sans", Arial, sans-serif; }
.container { width: 700px; margin: 0 auto; }
.site-header { height: 101px; padding-top: 40px; margin-bottom: 30px; display: flex; justify-content: space-between; align-items: flex-start; border-bottom: 1px solid #e5e5e5; }
.site-header h3 { margin: 0; font-size: 24px; line-height: 40px; font-weight: 500; color: #777; }
.site-header nav { display: flex; gap: 2px; }
.site-header a { padding: 10px 15px; border-radius: 4px; font-size: 13px; line-height: 18px; color: #337ab7; }
.site-header a.active { background: #337ab7; color: #fff; }
.jumbotron { height: 860px; padding: 98px 60px 0; border-radius: 6px; background: #eee; display: flex; flex-direction: column; align-items: stretch; text-align: center; color: #000; }
.jumbotron h1 { margin: 0 0 50px; font: 700 63px/73px "Liberation Serif", "Times New Roman", serif; color: #8e8e8e; text-shadow: 1px 1px 1px #aaa; }
.field { height: 34px; padding: 6px 12px; border: 1px solid #ccc; border-radius: 4px; background: #fff; box-shadow: inset 0 1px 1px rgba(0,0,0,.075); font: 14px/20px "Liberation Sans", Arial, sans-serif; color: #555; outline: 0; }
.field.date { padding-left: 13px; letter-spacing: .45px; }
.jumbotron h2 { margin: 20px 0 10px; font-size: 30px; line-height: 33px; font-weight: 500; color: #222; text-shadow: 0 2px 3px rgba(0,0,0,.6); }
.jumbotron p { margin: 0; height: 19px; padding-top: 1px; font-size: 13px; line-height: 18px; }
.file { display: flex; align-items: center; gap: 5px; padding: 2px 12px 0; }
.file button { width: 97px; height: 22px; padding: 0; border: 1px solid #a0a0a0; border-radius: 2px; background: linear-gradient(#f6f6f6, #dcdcdc); font: 14px/20px "Liberation Sans", Arial, sans-serif; color: #000; }
.drop { width: 464px; height: 100px; margin: 15px auto; padding-top: 20px; border: 2px dashed #000; background: #fff; font-size: 13px; line-height: 18.500px; }
.submit { height: 58px; padding: 0; border: 1px solid #2e6da4; border-radius: 6px; background: #337ab7; color: #fff; font: 21px/28px "Liberation Sans", Arial, sans-serif; }
.scrollbar { width: 15px; background: #f1f1f1; display: flex; flex-direction: column; align-items: center; }
.scrollbar i { display: block; }
.scrollbar .up { margin: 5px 0 5px; border: 4px solid transparent; border-top: 0; border-bottom: 4px solid #999; }
.scrollbar .thumb { width: 11px; height: 790px; background: #c1c1c1; }
.scrollbar .down { margin-top: auto; margin-bottom: 5px; border: 4px solid transparent; border-bottom: 0; border-top: 4px solid #505050; }

/* desktop and dock */
.desktop { position: relative; height: 72px; flex: none; display: flex; justify-content: center; background: radial-gradient(circle at 1760px 50px, #020f05, transparent 160px); }
.desk-folder { position: absolute; left: 64px; top: 0; width: 50px; text-align: center; color: #fff; font-size: 14px; line-height: 18px; }
.desk-folder .clip { height: 25px; overflow: hidden; display: flex; align-items: flex-end; }
.desk-folder span { display: block; margin-top: 2px; letter-spacing: -.3px; }
.dock { position: relative; width: 456px; padding: 11px 0 0 17.500px; display: flex; }
.dock .shelf { position: absolute; left: -1px; bottom: 0; }
.dock .app { position: relative; width: 51px; height: 61px; }
.dock .sep { position: relative; width: 11px; height: 61px; }
.cal { font-size: 27px; fill: #e6e4d8; }

/* file manager */
.window { position: absolute; left: 1080px; top: 545px; width: 819px; height: 452px; display: flex; flex-direction: column; border-radius: 7px 7px 0 0; background: #f2f1f0; box-shadow: 0 6px 46px rgba(0,0,0,.7), 0 4px 14px rgba(0,0,0,.3); }
.titlebar { height: 29px; padding-left: 7px; display: flex; align-items: center; gap: 12px; border-radius: 7px 7px 0 0; background: linear-gradient(#5f5d50, #55534a 20%, #403f3a); color: #dfdbd2; font-weight: 700; font-size: 14px; letter-spacing: .42px; }
.wbar { height: 42px; padding: 4px 7px 0 7px; display: flex; align-items: flex-start; background: linear-gradient(#3e3d38, #504e46); border-bottom: 1px solid #3a3934; color: #dfdbd2; font-size: 14px; }
.grp { height: 33px; display: flex; border: 1px solid #35342f; border-radius: 5px; background: linear-gradient(#46453f, #4c4a44); box-shadow: inset 0 0 0 1px #57564e; }
.grp span { display: flex; align-items: center; justify-content: center; white-space: nowrap; }
.hist { width: 65px; }
.hist span { flex: 1; }
.grp .dark { background: #3a3934; border-radius: 0 4px 4px 0; }
.grp .dark2 { background: #3e3d37; border-radius: 0 4px 4px 0; border-left: 1px solid #302f2b; }
.path { margin-left: 9px; width: 365px; border-radius: 5px 0 0 5px; }
.path .p1 { width: 75px; padding-right: 5px; gap: 1px; letter-spacing: .2px; }
.path .p2 { width: 76px; border-left: 1px solid #36352f; letter-spacing: .5px; }
.path .p3 { width: 96px; font-weight: 700; letter-spacing: .35px; background: #3c3b36; border: 1px solid #2f2e2a; border-radius: 0 4px 4px 0; }
.path .p4 { flex: 1; letter-spacing: .5px; }
.search { width: 34px; margin-left: auto; }
.search span, .views span { flex: 1; }
.views { width: 67px; margin-left: 8px; }
.wbody { flex: 1; display: flex; min-height: 0; }
.places { width: 188px; margin: 0; padding: 3px 0 0 1px; list-style: none; border-left: 1px solid #c8c4c0; border-right: 1px solid #b6b3b0; border-bottom: 1px solid #c8c4c0; color: #4b4b4b; }
.places li { height: 30px; padding-left: 9px; display: flex; align-items: center; gap: 10px; font-size: 14px; letter-spacing: .3px; }
.places svg { width: 16px; height: 16px; fill: currentColor; }
.places .rule { height: 10px; margin: 5px 0 -5px -1px; border-top: 1px solid #d8d5d2; box-shadow: inset 0 1px #fff; }
.files { position: relative; flex: 1; margin-left: 6px; background: #fff; }
.grid { display: grid; grid-template-columns: repeat(4, 155px); grid-auto-rows: 77px; padding: 16px 0 0 4.500px; }
.item { display: flex; flex-direction: column; align-items: center; font-size: 14px; letter-spacing: .23px; }
.item.loose { letter-spacing: .52px; }
.item svg { width: 48px; height: 40px; }
.item span { height: 20px; padding: 0 4px 0 5px; border-radius: 5px; line-height: 20px; white-space: nowrap; }
.item.sel span { background: #f08763; color: #fff; }
.status { position: absolute; right: 0; bottom: 0; width: 342px; height: 26px; padding-left: 11px; border: 1px solid #bdbab7; border-width: 1px 0 0 1px; border-radius: 4px 0 0 0; font-size: 14px; line-height: 24px; letter-spacing: .33px; white-space: nowrap; }
```
